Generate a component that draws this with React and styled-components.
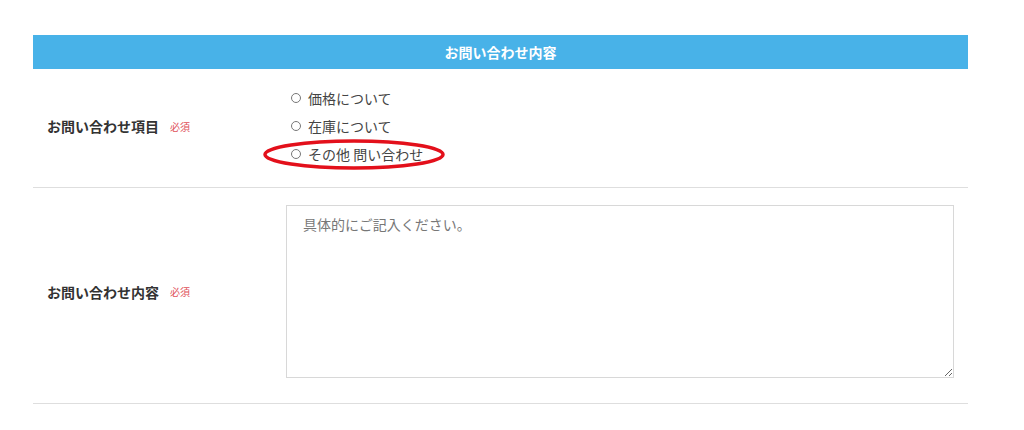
import React from "react";
import styled, { createGlobalStyle } from "styled-components";

const GlobalStyle = createGlobalStyle`
  body {
    margin: 0;
    background: #fff;
    font-family: "Noto Sans CJK JP", "Noto Sans", sans-serif;
    color: #333;
  }
`;

const options = ["価格について", "在庫について", "その他 問い合わせ"];

export default function App() {
  return (
    <>
      <GlobalStyle />
      <Page>
        <Form>
          <Header>お問い合わせ内容</Header>
          <Row>
            <Label>
              お問い合わせ項目<Required>必須</Required>
            </Label>
            <RadioList>
              {options.map((o, i) => (
                <RadioItem key={o}>
                  <Circle />
                  {o}
                  {i === 2 && (
                    <Mark viewBox="0 0 184 31" width="184" height="31">
                      <ellipse
                        cx="92"
                        cy="15.5"
                        rx="89"
                        ry="13.5"
                        fill="none"
                        stroke="#e3101b"
                        strokeWidth="3.5"
                      />
                    </Mark>
                  )}
                </RadioItem>
              ))}
            </RadioList>
          </Row>
          <Row $tall>
            <Label>
              お問い合わせ内容<Required>必須</Required>
            </Label>
            <TextArea placeholder="具体的にご記入ください。" />
          </Row>
        </Form>
      </Page>
    </>
  );
}

const Page = styled.div`
  padding: 35px 0 0 33px;
`;

const Form = styled.div`
  width: 935px;
`;

const Header = styled.div`
  height: 34px;
  background: #48b2e8;
  color: #fff;
  font-weight: 700;
  font-size: 14px;
  display: flex;
  align-items: center;
  justify-content: center;
`;

const Row = styled.div`
  display: grid;
  grid-template-columns: 253px 1fr;
  align-items: center;
  border-bottom: 1px solid #dedede;
  padding: ${(p) => (p.$tall ? "17px 14px 25px 0" : "15px 14px 19px 0")};
`;

const Label = styled.div`
  padding-left: 14px;
  font-size: 14px;
  font-weight: 700;
  color: #333;
  display: flex;
  align-items: center;
`;

const Required = styled.span`
  margin-left: 11px;
  font-size: 10px;
  font-weight: 400;
  color: #e0525a;
`;

const RadioList = styled.div`
  display: flex;
  flex-direction: column;
`;

const RadioItem = styled.label`
  position: relative;
  display: flex;
  align-items: center;
  height: 28px;
  font-size: 14px;
  color: #444;
`;

const Circle = styled.span`
  flex: none;
  width: 8px;
  height: 8px;
  border: 1px solid #777;
  border-radius: 50%;
  margin: 0 7px 0 5px;
`;

const Mark = styled.svg`
  position: absolute;
  left: -24px;
  top: -1px;
  pointer-events: none;
`;

const TextArea = styled.textarea`
  width: 668px;
  height: 173px;
  box-sizing: border-box;
  border: 1px solid #d8d8d8;
  padding: 8px 16px;
  font-family: "Noto Sans CJK JP", "Noto Sans", sans-serif;
  font-size: 14px;
  color: #333;
  outline: none;
  &::placeholder {
    color: #777;
  }
`;
